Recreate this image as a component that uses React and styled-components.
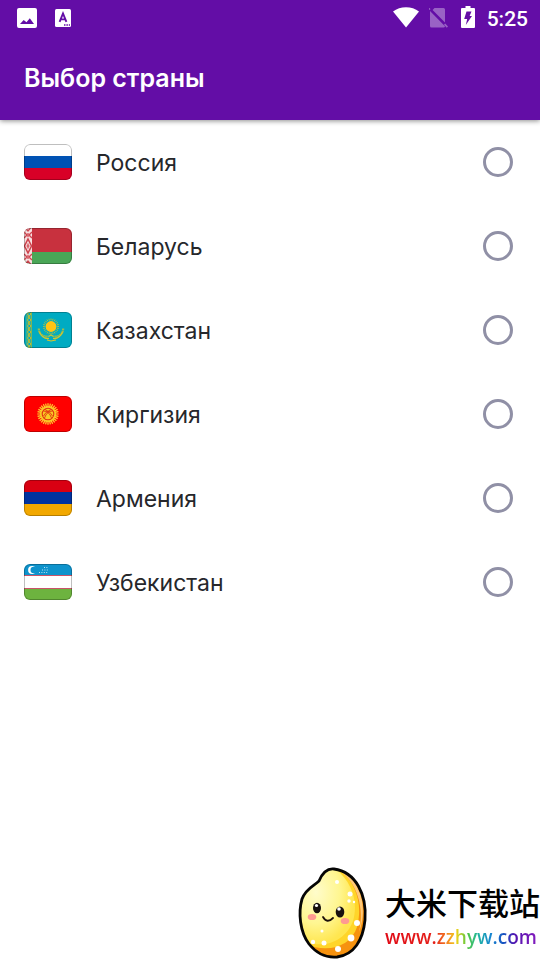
import { useState } from "react";
import styled, { createGlobalStyle } from "styled-components";

const colors = {
    primary: "#630da6",
    text: "#26272b",
    radio: "#9090a6",
    white: "#ffffff",
};

const GlobalStyle = createGlobalStyle`
    *, *::before, *::after {
        box-sizing: border-box;
    }

    body {
        margin: 0;
        background: ${colors.white};
        color: ${colors.text};
        font-family: Inter, Roboto, "Liberation Sans", sans-serif;
    }
`;

const Screen = styled.div`
    position: relative;
    min-height: 100vh;
    overflow: hidden;
`;

const Header = styled.header`
    background: ${colors.primary};
    color: ${colors.white};
    box-shadow: 0 1px 5px rgba(0, 0, 0, 0.45);
`;

const StatusBar = styled.div`
    display: flex;
    justify-content: space-between;
    align-items: center;
    height: 36px;
    padding: 0 12px 0 17px;
`;

const StatusGroup = styled.div`
    display: flex;
    align-items: center;
    gap: ${({ $gap }) => $gap}px;

    svg {
        display: block;
        fill: currentColor;
    }
`;

const Clock = styled.time`
    padding-top: 2px;
    font: 500 21px/34px Roboto, sans-serif;
`;

const Title = styled.h1`
    margin: 0;
    padding: 0 24px;
    font-size: 25px;
    font-weight: 600;
    line-height: 84px;
`;

const CountryList = styled.ul`
    margin: 0;
    padding: 0;
    list-style: none;
`;

const CountryRow = styled.label`
    display: flex;
    align-items: center;
    gap: 24px;
    height: 84px;
    padding: 0 27px 0 24px;
    cursor: pointer;
`;

const Flag = styled.svg`
    flex: none;
    width: 48px;
    height: 36px;
    border-radius: 6px;
`;

const CountryName = styled.span`
    flex: 1;
    padding-top: 2px;
    font-size: 23px;
    line-height: 32px;
`;

const Radio = styled.input`
    appearance: none;
    width: 30px;
    height: 30px;
    margin: 0;
    border: 3px solid ${colors.radio};
    border-radius: 50%;
    cursor: pointer;

    &:checked {
        border-color: ${colors.primary};
        background: radial-gradient(${colors.primary} 50%, transparent 55%);
    }
`;

const Watermark = styled.div`
    position: absolute;
    right: 0;
    bottom: 0;
    display: flex;
    align-items: center;
    gap: 16px;
`;

const WatermarkText = styled.div`
    display: flex;
    flex-direction: column;
    padding-top: 14px;
    color: #000;
    white-space: nowrap;
`;

const SiteName = styled.span`
    font: 500 31px/36px "Liberation Sans", "Noto Sans CJK SC", sans-serif;
`;

const SiteUrl = styled.span`
    font: 600 19px/28px "Open Sans", sans-serif;
    background: linear-gradient(
        90deg,
        #e00b16 0%,
        #e5201a 32%,
        #f58220 40%,
        #f2d21b 46%,
        #55c840 53%,
        #20b5a0 60%,
        #1687d0 68%,
        #1750c0 77%,
        #5514b0 84%,
        #8a1dc0 100%
    );
    background-clip: text;
    -webkit-background-clip: text;
    color: transparent;
`;

const rays = (count, cx, cy, inner, outer) =>
    Array.from({ length: count }, (_, i) => {
        const a = (i * 2 * Math.PI) / count;
        const x = Math.cos(a);
        const y = Math.sin(a);
        return `M${cx + x * inner} ${cy + y * inner}L${cx + x * outer} ${cy + y * outer}`;
    }).join("");

const Stripes = ({ items }) =>
    items.map(([fill, y, height]) => (
        <rect key={y} y={y} width="48" height={height} fill={fill} />
    ));

const Russia = () => (
    <Stripes items={[["#fff", 0, 12], ["#0052b4", 12, 12], ["#d80027", 24, 12]]} />
);

const Belarus = () => (
    <>
        <Stripes items={[["#c8313e", 0, 24], ["#4aa657", 24, 12]]} />
        <rect width="8" height="36" fill="#f7dfe0" />
        <g stroke="#cf4650" fill="none">
            <path d="M4 11L7.5 18L4 25L0.5 18Z" strokeWidth="1.6" />
            <path d="M4 15.5V20.5M2.5 18H5.5" strokeWidth="1.2" />
            <path d="M0 10L3 7L0 4M8 10L5 7L8 4M0 26L3 29L0 32M8 26L5 29L8 32" strokeWidth="1.4" />
            <path d="M1.5 0L4 3L6.5 0M1.5 36L4 33L6.5 36M4 5V9M4 27V31" strokeWidth="1.2" />
        </g>
    </>
);

const Kazakhstan = () => (
    <>
        <rect width="48" height="36" fill="#00abc2" />
        <path d="M3 0V36M7.5 0V36" stroke="#9bb83e" strokeWidth="0.8" />
        {[0, 6, 12, 18, 24, 30].map((y) => (
            <path
                key={y}
                transform={`translate(0 ${y})`}
                d="M5.2 0L7 2L5.2 4L3.5 2ZM4 4L6.5 6M6.5 4L4 6"
                fill="none"
                stroke="#c3bd2d"
                strokeWidth="1"
            />
        ))}
        <path d={rays(24, 27, 14.5, 6.2, 8)} stroke="#a8c040" strokeWidth="1" />
        <circle cx="27" cy="14.5" r="5.4" fill="#ffc414" />
        <g fill="none">
            <path
                d="M14.8 16.5C15 22 19 25 24.5 24.5M39.2 16.5C39 22 35 25 29.5 24.5"
                stroke="#9fbc48"
                strokeWidth="2.2"
                strokeDasharray="1.6 0.6"
            />
            <path
                d="M15.5 20C17.5 25 21 27 25 26.5M38.5 20C36.5 25 33 27 29 26.5M23 28L27 29L32 28M24.5 24.5L27 23L29.5 24.5"
                stroke="#d5c62b"
                strokeWidth="1.1"
            />
        </g>
    </>
);

const Kyrgyzstan = () => (
    <>
        <rect width="48" height="36" fill="#ff0000" />
        <path d={rays(28, 24, 18, 7, 10.7)} stroke="#ffd52e" strokeWidth="1.2" />
        <circle cx="24" cy="18" r="8" fill="#f9cc25" />
        <circle cx="24" cy="18" r="5.8" fill="none" stroke="#e33210" strokeWidth="1.1" />
        <path
            d="M19.5 15Q25 15 27.5 22M21 13.5Q27 16 28.5 20M28.5 15Q23 15 20.5 22M27 13.5Q21 16 19.5 20"
            fill="none"
            stroke="#e33210"
            strokeWidth="0.9"
        />
    </>
);

const Armenia = () => (
    <Stripes items={[["#d90012", 0, 12], ["#0033a0", 12, 12], ["#f2a800", 24, 12]]} />
);

const Uzbekistan = () => (
    <>
        <Stripes
            items={[
                ["#0e93cc", 0, 11],
                ["#c95468", 11, 1],
                ["#fff", 12, 12],
                ["#c95468", 24, 1],
                ["#6db33f", 25, 11],
            ]}
        />
        <circle cx="8" cy="6" r="3.9" fill="#fff" />
        <circle cx="9.8" cy="6" r="3.3" fill="#0e93cc" />
        <path
            d="M20 3.5H24M18 6H24M15 8.5H24"
            stroke="#b9e2f3"
            strokeWidth="1"
            strokeDasharray="1 1.4"
        />
    </>
);

const countries = [
    { code: "ru", name: "Россия", Picture: Russia },
    { code: "by", name: "Беларусь", Picture: Belarus },
    { code: "kz", name: "Казахстан", Picture: Kazakhstan },
    { code: "kg", name: "Киргизия", Picture: Kyrgyzstan },
    { code: "am", name: "Армения", Picture: Armenia },
    { code: "uz", name: "Узбекистан", Picture: Uzbekistan },
];

const ImageIcon = () => (
    <svg width="20" height="20" viewBox="0 0 20 20">
        <path
            fillRule="evenodd"
            d="M2 0H18A2 2 0 0 1 20 2V18A2 2 0 0 1 18 20H2A2 2 0 0 1 0 18V2A2 2 0 0 1 2 0ZM3 16H17L12.8 10.3L9.5 14.2L6.7 12Z"
        />
    </svg>
);

const LetterIcon = () => (
    <svg width="16" height="18" viewBox="0 0 16 18">
        <rect width="16" height="18" rx="1.5" />
        <g fill="none" stroke={colors.primary}>
            <path d="M4.6 12.8L8 4.5L11.4 12.8M5.8 10.4H10.2" strokeWidth="1.9" />
            <path d="M9 16H15" strokeWidth="1.5" strokeDasharray="1.5 0.9" />
        </g>
    </svg>
);

const WifiIcon = () => (
    <svg width="26" height="22" viewBox="0 0 26 22">
        <path d="M13 20.5L0 4.5C7 -1.2 19 -1.2 26 4.5Z" />
    </svg>
);

const NoSimIcon = () => (
    <svg width="20" height="20" viewBox="0 0 20 20" opacity="0.35">
        <path d="M5.5 0H14.5A1.5 1.5 0 0 1 16 1.5V14.5L3.6 2ZM1 3L16 18.2A1.5 1.5 0 0 1 14.5 19.5H2.5A1.5 1.5 0 0 1 1 18Z" />
        <path d="M15 16.8L16.2 15.6L19 18.6L17.8 19.8ZM0 2L-1.2 0.8L0.2 -0.4L1.6 1.2Z" />
    </svg>
);

const BatteryIcon = () => (
    <svg width="18" height="24" viewBox="-2 0 18 24">
        <path
            fillRule="evenodd"
            d="M4.5 0H9.5V2H13A1 1 0 0 1 14 3V21A1 1 0 0 1 13 22H1A1 1 0 0 1 0 21V3A1 1 0 0 1 1 2H4.5ZM5.5 5.5H10.5L8.6 10H11L4.8 19L6.2 13H3.2Z"
        />
    </svg>
);

const Grain = () => (
    <svg width="72" height="96" viewBox="0 0 72 96">
        <defs>
            <clipPath id="grain">
                <path d="M37 5C29 4 25 10 22 17C17 22 9 24 5 35C1 49 3 68 12 80C20 90 29 94 40 93C57 91 66 76 68 56C70 31 59 8 37 5Z" />
            </clipPath>
            <radialGradient id="shine" cx="0.35" cy="0.35" r="0.65">
                <stop offset="0" stopColor="#fffccb" />
                <stop offset="0.6" stopColor="#fff691" />
                <stop offset="1" stopColor="#ffe650" />
            </radialGradient>
        </defs>
        <g clipPath="url(#grain)">
            <rect width="72" height="96" fill="#f6920f" />
            <path d="M34 0C60 14 66 41 60 63C54 82 32 90 8 80L-4 50L4 10Z" fill="#ffd52a" />
            <path d="M32 0C54 14 62 36 56 57C49 76 28 86 7 77L-2 45L5 10Z" fill="url(#shine)" />
            <path d="M42 6C60 18 68 45 62 68C69 52 69 18 42 6Z" fill="#ffc979" />
        </g>
        <path
            d="M37 5C29 4 25 10 22 17C17 22 9 24 5 35C1 49 3 68 12 80C20 90 29 94 40 93C57 91 66 76 68 56C70 31 59 8 37 5Z"
            fill="none"
            stroke="#050505"
            strokeWidth="2.8"
        />
        <g fill="#fff">
            <circle cx="53" cy="30" r="2.5" />
            <circle cx="52" cy="37" r="1.7" />
            <circle cx="57" cy="38" r="1.2" />
            <circle cx="60" cy="59" r="3" />
            <circle cx="54" cy="74" r="3.4" />
            <circle cx="41" cy="85" r="3" />
            <circle cx="16" cy="78" r="2.2" />
            <circle cx="27" cy="79" r="2.5" />
            <circle cx="25" cy="67" r="1.5" />
            <circle cx="40" cy="18" r="2" />
        </g>
        <ellipse cx="15" cy="53" rx="4.3" ry="3.1" fill="#ff9a91" />
        <ellipse cx="48" cy="57" rx="4.3" ry="3.1" fill="#ff9a91" />
        <g fill="#17100e">
            <ellipse cx="20" cy="44" rx="4" ry="5.3" />
            <ellipse cx="43" cy="48" rx="4.3" ry="5.6" />
        </g>
        <g fill="#fff">
            <circle cx="19.5" cy="41.5" r="1.6" />
            <circle cx="42" cy="45" r="1.8" />
        </g>
        <path d="M26 53Q30 60 36 54" fill="none" stroke="#1b100b" strokeWidth="1.8" strokeLinecap="round" />
    </svg>
);

const App = () => {
    const [selected, setSelected] = useState(null);

    return (
        <Screen>
            <GlobalStyle />
            <Header>
                <StatusBar>
                    <StatusGroup $gap={18}>
                        <ImageIcon />
                        <LetterIcon />
                    </StatusGroup>
                    <StatusGroup $gap={10}>
                        <WifiIcon />
                        <NoSimIcon />
                        <BatteryIcon />
                        <Clock>5:25</Clock>
                    </StatusGroup>
                </StatusBar>
                <Title>Выбор страны</Title>
            </Header>
            <CountryList>
                {countries.map(({ code, name, Picture }) => (
                    <li key={code}>
                        <CountryRow>
                            <Flag viewBox="0 0 48 36" aria-hidden="true">
                                <Picture />
                                <rect
                                    x="0.5"
                                    y="0.5"
                                    width="47"
                                    height="35"
                                    rx="5.5"
                                    fill="none"
                                    stroke="#000"
                                    strokeOpacity="0.25"
                                />
                            </Flag>
                            <CountryName>{name}</CountryName>
                            <Radio
                                type="radio"
                                name="country"
                                value={code}
                                checked={selected === code}
                                onChange={() => setSelected(code)}
                            />
                        </CountryRow>
                    </li>
                ))}
            </CountryList>
            <Watermark>
                <Grain />
                <WatermarkText>
                    <SiteName lang="zh">大米下载站</SiteName>
                    <SiteUrl>www.zzhyw.com</SiteUrl>
                </WatermarkText>
            </Watermark>
        </Screen>
    );
};

export default App;
